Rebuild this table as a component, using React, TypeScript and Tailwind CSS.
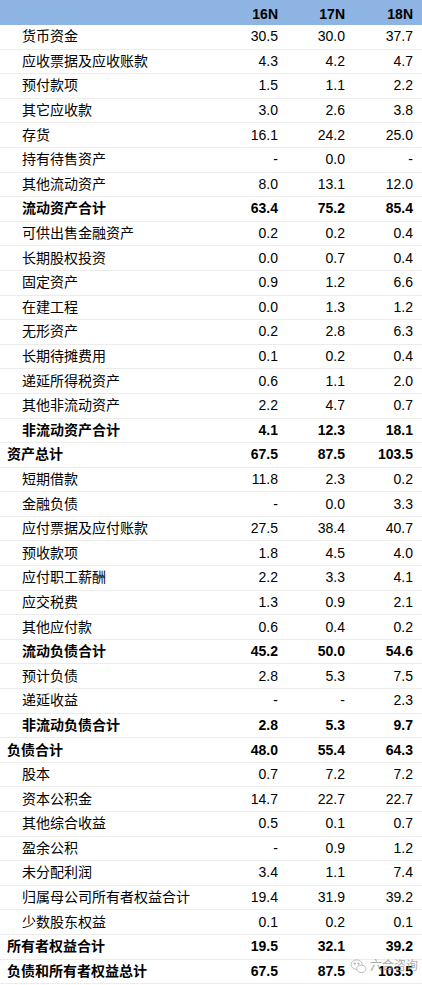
const rows: [string, string, string, string, number][] = [
  // label, 16N, 17N, 18N, level (1 = normal, 2 = subtotal, 3 = total)
  ["货币资金", "30.5", "30.0", "37.7", 1],
  ["应收票据及应收账款", "4.3", "4.2", "4.7", 1],
  ["预付款项", "1.5", "1.1", "2.2", 1],
  ["其它应收款", "3.0", "2.6", "3.8", 1],
  ["存货", "16.1", "24.2", "25.0", 1],
  ["持有待售资产", "-", "0.0", "-", 1],
  ["其他流动资产", "8.0", "13.1", "12.0", 1],
  ["流动资产合计", "63.4", "75.2", "85.4", 2],
  ["可供出售金融资产", "0.2", "0.2", "0.4", 1],
  ["长期股权投资", "0.0", "0.7", "0.4", 1],
  ["固定资产", "0.9", "1.2", "6.6", 1],
  ["在建工程", "0.0", "1.3", "1.2", 1],
  ["无形资产", "0.2", "2.8", "6.3", 1],
  ["长期待摊费用", "0.1", "0.2", "0.4", 1],
  ["递延所得税资产", "0.6", "1.1", "2.0", 1],
  ["其他非流动资产", "2.2", "4.7", "0.7", 1],
  ["非流动资产合计", "4.1", "12.3", "18.1", 2],
  ["资产总计", "67.5", "87.5", "103.5", 3],
  ["短期借款", "11.8", "2.3", "0.2", 1],
  ["金融负债", "-", "0.0", "3.3", 1],
  ["应付票据及应付账款", "27.5", "38.4", "40.7", 1],
  ["预收款项", "1.8", "4.5", "4.0", 1],
  ["应付职工薪酬", "2.2", "3.3", "4.1", 1],
  ["应交税费", "1.3", "0.9", "2.1", 1],
  ["其他应付款", "0.6", "0.4", "0.2", 1],
  ["流动负债合计", "45.2", "50.0", "54.6", 2],
  ["预计负债", "2.8", "5.3", "7.5", 1],
  ["递延收益", "-", "-", "2.3", 1],
  ["非流动负债合计", "2.8", "5.3", "9.7", 2],
  ["负债合计", "48.0", "55.4", "64.3", 3],
  ["股本", "0.7", "7.2", "7.2", 1],
  ["资本公积金", "14.7", "22.7", "22.7", 1],
  ["其他综合收益", "0.5", "0.1", "0.7", 1],
  ["盈余公积", "-", "0.9", "1.2", 1],
  ["未分配利润", "3.4", "1.1", "7.4", 1],
  ["归属母公司所有者权益合计", "19.4", "31.9", "39.2", 1],
  ["少数股东权益", "0.1", "0.2", "0.1", 1],
  ["所有者权益合计", "19.5", "32.1", "39.2", 3],
  ["负债和所有者权益总计", "67.5", "87.5", "103.5", 3],
];

export default function App() {
  return (
    <div
      className="relative w-[422px] h-[985px] overflow-hidden bg-white text-[14px] text-black"
      style={{ fontFamily: '"Liberation Sans", Arial, "Noto Sans CJK SC", sans-serif' }}
    >
      <div className="grid h-[25px] grid-cols-[1fr_68px_67px_68px] items-center bg-[#8db4e2] pr-[9px] pt-[3px] font-bold">
        <span />
        <span className="text-right">16N</span>
        <span className="text-right">17N</span>
        <span className="text-right">18N</span>
      </div>

      {rows.map(([label, a, b, c, level]) => (
        <div
          key={label}
          className={
            "grid h-[24.6px] grid-cols-[1fr_68px_67px_68px] items-center border-b-[1.5px] border-[#ececec] pr-[9px] " +
            (level > 1 ? "font-bold" : "")
          }
        >
          <span className={"whitespace-nowrap " + (level === 3 ? "pl-[7px]" : "pl-[22px]")}>{label}</span>
          <span className="text-right">{a}</span>
          <span className="text-right">{b}</span>
          <span className="text-right">{c}</span>
        </div>
      ))}

      {/* watermark */}
      <div className="pointer-events-none absolute left-[350px] top-[957px] flex items-center gap-[3px] whitespace-nowrap text-[#8f8f8f] opacity-75">
        <svg width="17" height="15" viewBox="0 0 18 16" fill="none" stroke="#a0a0a0" strokeWidth="1">
          <ellipse cx="7" cy="6" rx="6" ry="5" />
          <ellipse cx="12" cy="10.5" rx="5" ry="4" fill="white" />
          <circle cx="5" cy="5" r="0.8" fill="#a0a0a0" />
          <circle cx="9" cy="5" r="0.8" fill="#a0a0a0" />
        </svg>
        <span className="text-[12px] font-normal">六合咨询</span>
      </div>
    </div>
  );
}
